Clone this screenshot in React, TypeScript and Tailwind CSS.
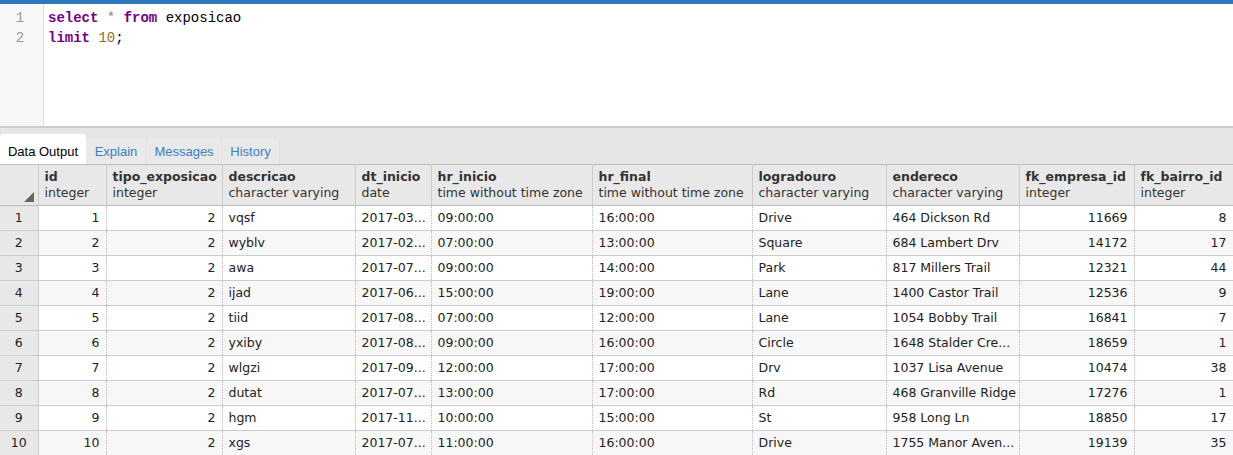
import React from "react";

const columns = [
  { name: "id", type: "integer", width: 68, num: true },
  { name: "tipo_exposicao", type: "integer", width: 116, num: true },
  { name: "descricao", type: "character varying", width: 133 },
  { name: "dt_inicio", type: "date", width: 76 },
  { name: "hr_inicio", type: "time without time zone", width: 161 },
  { name: "hr_final", type: "time without time zone", width: 160 },
  { name: "logradouro", type: "character varying", width: 134 },
  { name: "endereco", type: "character varying", width: 133 },
  { name: "fk_empresa_id", type: "integer", width: 115, num: true },
  { name: "fk_bairro_id", type: "integer", width: 99, num: true },
];

const rows: string[][] = [
  ["1", "2", "vqsf", "2017-03...", "09:00:00", "16:00:00", "Drive", "464 Dickson Rd", "11669", "8"],
  ["2", "2", "wyblv", "2017-02...", "07:00:00", "13:00:00", "Square", "684 Lambert Drv", "14172", "17"],
  ["3", "2", "awa", "2017-07...", "09:00:00", "14:00:00", "Park", "817 Millers Trail", "12321", "44"],
  ["4", "2", "ijad", "2017-06...", "15:00:00", "19:00:00", "Lane", "1400 Castor Trail", "12536", "9"],
  ["5", "2", "tiid", "2017-08...", "07:00:00", "12:00:00", "Lane", "1054 Bobby Trail", "16841", "7"],
  ["6", "2", "yxiby", "2017-08...", "09:00:00", "16:00:00", "Circle", "1648 Stalder Cre...", "18659", "1"],
  ["7", "2", "wlgzi", "2017-09...", "12:00:00", "17:00:00", "Drv", "1037 Lisa Avenue", "10474", "38"],
  ["8", "2", "dutat", "2017-07...", "13:00:00", "17:00:00", "Rd", "468 Granville Ridge", "17276", "1"],
  ["9", "2", "hgm", "2017-11...", "10:00:00", "15:00:00", "St", "958 Long Ln", "18850", "17"],
  ["10", "2", "xgs", "2017-07...", "11:00:00", "16:00:00", "Drive", "1755 Manor Aven...", "19139", "35"],
];

const tabs = [
  { label: "Data Output", width: "w-[86px]" },
  { label: "Explain", width: "w-[61px]" },
  { label: "Messages", width: "w-[75px]" },
  { label: "History", width: "w-[58px]" },
];

const App = () => {
  return (
    <div className="w-[1233px] h-[455px] overflow-hidden bg-white">
      <div className="h-[4px] bg-[#2d77b9]" />

      {/* query editor */}
      <div className="flex h-[122px]">
        <div className="w-[44px] shrink-0 bg-[#f7f7f7] border-r border-[#dddddd] pt-[4px] font-['Liberation_Mono',monospace] text-[14px] leading-[20px] text-[#999999]">
          <div className="text-center pr-[3px]">1</div>
          <div className="text-center pr-[3px]">2</div>
        </div>
        <div className="pl-[4px] pt-[4px] font-['Liberation_Mono',monospace] text-[14px] leading-[20px] text-black">
          <div>
            <span className="font-bold text-[#770088]">select</span>{" "}
            <span className="text-[#888888]">*</span>{" "}
            <span className="font-bold text-[#770088]">from</span> exposicao
          </div>
          <div>
            <span className="font-bold text-[#770088]">limit</span>{" "}
            <span className="text-[#9a6a2f]">10</span>;
          </div>
        </div>
      </div>

      {/* result tabs */}
      <div className="border-t-2 border-[#cccccc] bg-[#e6e6e6] h-[38px] flex items-end">
        {tabs.map((t, i) =>
          i === 0 ? (
            <div
              key={t.label}
              className={`${t.width} h-[30px] bg-white rounded-t-[4px] flex items-center justify-center pt-[6px] font-['Liberation_Sans',sans-serif] text-[13px] text-black`}
            >
              {t.label}
            </div>
          ) : (
            <div
              key={t.label}
              className={`${t.width} h-[25px] bg-[#e9e9e9] border-r border-[#e2e2e2] rounded-t-[3px] flex items-center justify-center pt-[1px] font-['Liberation_Sans',sans-serif] text-[13px] text-[#3b7fc4]`}
            >
              {t.label}
            </div>
          )
        )}
      </div>

      {/* data grid */}
      <table className="w-[1233px] table-fixed border-collapse font-['DejaVu_Sans',sans-serif] text-[12.5px] text-[#222222]">
        <colgroup>
          <col className="w-[38px]" />
          {columns.map((c) => (
            <col key={c.name} style={{ width: c.width }} />
          ))}
        </colgroup>
        <thead>
          <tr className="bg-[#e8e8e8] h-[41px] border-t border-b border-[#bbbbbb]">
            <th className="border-r border-[#cccccc] relative p-0">
              <svg className="absolute right-[4px] bottom-[3px]" width="10" height="10" viewBox="0 0 10 10">
                <polygon points="10,0 10,10 0,10" fill="#666666" />
              </svg>
            </th>
            {columns.map((c) => (
              <th
                key={c.name}
                className="border-r border-[#cccccc] text-left align-top pt-[4px] px-[6px] font-normal leading-[16px] whitespace-nowrap overflow-hidden"
              >
                <div className="font-bold text-[#333333]">{c.name}</div>
                <div className="text-[#333333]">{c.type}</div>
              </th>
            ))}
          </tr>
        </thead>
        <tbody>
          {rows.map((r, i) => (
            <tr
              key={i}
              className={`h-[25px] border-b border-[#cccccc] ${i % 2 === 1 ? "bg-[#f7f7f7]" : "bg-white"}`}
            >
              <td className="bg-[#e8e8e8] text-center border-r border-[#cccccc]">{i + 1}</td>
              {r.map((v, j) => (
                <td
                  key={j}
                  className={`px-[6px] border-r border-dotted border-[#bbbbbb] whitespace-nowrap overflow-hidden ${
                    columns[j].num ? "text-right" : "text-left"
                  }`}
                >
                  {v}
                </td>
              ))}
            </tr>
          ))}
        </tbody>
      </table>
    </div>
  );
};

export default App;
